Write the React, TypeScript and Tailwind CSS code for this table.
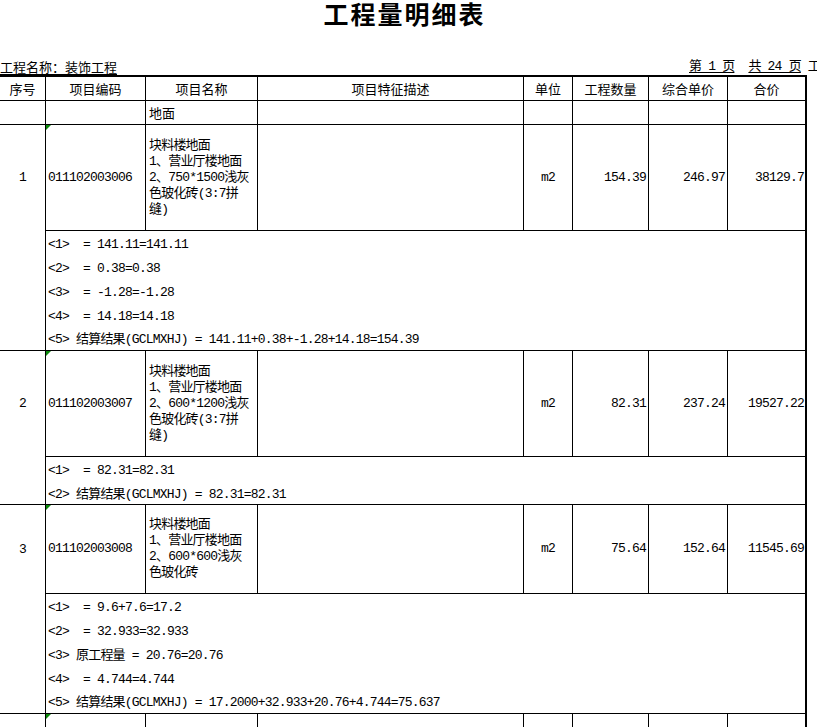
import React from "react";

type Item = {
  no: string;
  code: string;
  name: string[];
  unit: string;
  qty: string;
  price: string;
  total: string;
  calcs: string[];
};

const items: Item[] = [
  {
    no: "1",
    code: "011102003006",
    name: ["块料楼地面", "1、营业厅楼地面", "2、750*1500浅灰", "色玻化砖(3:7拼", "缝)"],
    unit: "m2",
    qty: "154.39",
    price: "246.97",
    total: "38129.7",
    calcs: [
      "<1>  = 141.11=141.11",
      "<2>  = 0.38=0.38",
      "<3>  = -1.28=-1.28",
      "<4>  = 14.18=14.18",
      "<5> 结算结果(GCLMXHJ) = 141.11+0.38+-1.28+14.18=154.39",
    ],
  },
  {
    no: "2",
    code: "011102003007",
    name: ["块料楼地面", "1、营业厅楼地面", "2、600*1200浅灰", "色玻化砖(3:7拼", "缝)"],
    unit: "m2",
    qty: "82.31",
    price: "237.24",
    total: "19527.22",
    calcs: ["<1>  = 82.31=82.31", "<2> 结算结果(GCLMXHJ) = 82.31=82.31"],
  },
  {
    no: "3",
    code: "011102003008",
    name: ["块料楼地面", "1、营业厅楼地面", "2、600*600浅灰", "色玻化砖"],
    unit: "m2",
    qty: "75.64",
    price: "152.64",
    total: "11545.69",
    calcs: [
      "<1>  = 9.6+7.6=17.2",
      "<2>  = 32.933=32.933",
      "<3> 原工程量 = 20.76=20.76",
      "<4>  = 4.744=4.744",
      "<5> 结算结果(GCLMXHJ) = 17.2000+32.933+20.76+4.744=75.637",
    ],
  },
];

const mono = "font-['Liberation_Mono','Noto_Sans_CJK_SC',monospace] tracking-[-0.8px] text-[13px]";

function Flag() {
  return (
    <span className="absolute left-0 top-0 h-0 w-0 border-t-[5px] border-r-[5px] border-t-[#0a8a0a] border-r-transparent" />
  );
}

function HeaderRow() {
  const cell = "flex h-[24px] items-center justify-center border-b border-black";
  return (
    <div className="flex font-['Noto_Sans_CJK_SC',sans-serif] text-[13px]">
      <div className={`${cell} w-[46px] border-r`}>序号</div>
      <div className={`${cell} w-[100px] border-r`}>项目编码</div>
      <div className={`${cell} w-[112px] border-r`}>项目名称</div>
      <div className={`${cell} w-[266px] border-r`}>项目特征描述</div>
      <div className={`${cell} w-[49px] border-r`}>单位</div>
      <div className={`${cell} w-[76px] border-r`}>工程数量</div>
      <div className={`${cell} w-[79px] border-r`}>综合单价</div>
      <div className={`${cell} w-[77px]`}>合价</div>
    </div>
  );
}

function SectionRow() {
  const cell = "flex h-[24px] items-center border-b border-black";
  return (
    <div className="flex font-['Noto_Sans_CJK_SC',sans-serif] text-[13px]">
      <div className={`${cell} w-[46px] border-r`} />
      <div className={`${cell} w-[100px] border-r`} />
      <div className={`${cell} w-[112px] border-r pl-[3px]`}>地面</div>
      <div className={`${cell} w-[266px] border-r`} />
      <div className={`${cell} w-[49px] border-r`} />
      <div className={`${cell} w-[76px] border-r`} />
      <div className={`${cell} w-[79px] border-r`} />
      <div className={`${cell} w-[77px]`} />
    </div>
  );
}

function Block({ item }: { item: Item }) {
  const rowH = item.name.length > 4 ? "h-[106px]" : "h-[89px]";
  const calcH = item.calcs.length > 2 ? "h-[120px]" : "h-[48px]";
  const cell = `flex ${rowH} items-center border-b border-black`;
  return (
    <div className={`flex ${mono}`}>
      <div className="w-[46px] border-r border-b border-black">
        <div className={`flex ${rowH} items-center justify-center`}>{item.no}</div>
      </div>
      <div className="flex flex-col">
        <div className="flex">
          <div className={`${cell} relative w-[100px] border-r pl-[2px]`}>
            <Flag />
            {item.code}
          </div>
          <div className={`${cell} w-[112px] border-r pl-[3px]`}>
            <div className="leading-[16px]">
              {item.name.map((l) => (
                <div key={l} className="whitespace-nowrap">
                  {l}
                </div>
              ))}
            </div>
          </div>
          <div className={`${cell} w-[266px] border-r`} />
          <div className={`${cell} w-[49px] justify-center border-r`}>{item.unit}</div>
          <div className={`${cell} w-[76px] justify-end border-r pr-[2px]`}>{item.qty}</div>
          <div className={`${cell} w-[79px] justify-end border-r pr-[2px]`}>{item.price}</div>
          <div className={`${cell} w-[77px] justify-end pr-[1px]`}>{item.total}</div>
        </div>
        <div className={`flex ${calcH} flex-col border-b border-black pl-[2px]`}>
          {item.calcs.map((c) => (
            <div key={c} className="flex flex-1 items-center whitespace-pre pt-[4px]">
              {c}
            </div>
          ))}
        </div>
      </div>
    </div>
  );
}

function EmptyRow() {
  const cell = "relative h-[106px] border-black";
  return (
    <div className="flex">
      <div className={`${cell} w-[46px] border-r`} />
      <div className={`${cell} w-[100px] border-r`}>
        <Flag />
      </div>
      <div className={`${cell} w-[112px] border-r`} />
      <div className={`${cell} w-[266px] border-r`} />
      <div className={`${cell} w-[49px] border-r`} />
      <div className={`${cell} w-[76px] border-r`} />
      <div className={`${cell} w-[79px] border-r`} />
      <div className={`${cell} w-[77px]`} />
    </div>
  );
}

export default function App() {
  return (
    <div className="h-[727px] w-[817px] overflow-hidden bg-white text-black">
      <div className="flex h-[30px] w-[807px] items-start justify-center pl-[2px] pt-[2px] font-['Liberation_Serif','Noto_Sans_CJK_SC',serif] text-[25px] font-bold leading-[28px] tracking-[2px]">
        工程量明细表
      </div>
      <div className={`flex h-[45px] items-end ${mono}`}>
        <div className="font-['Noto_Sans_CJK_SC',sans-serif] leading-[16px] tracking-normal underline underline-offset-2">
          工程名称：装饰工程
        </div>
        <div className="ml-auto w-[128px] overflow-hidden whitespace-pre leading-[16px]">
          <span className="underline underline-offset-2">第 1 页</span>
          {"  "}
          <span className="underline underline-offset-2">共 24 页</span>
          {" 工"}
        </div>
      </div>
      <div className="w-[807px] border-t-2 border-r-2 border-black">
        <HeaderRow />
        <SectionRow />
        {items.map((it) => (
          <Block key={it.no} item={it} />
        ))}
        <EmptyRow />
      </div>
    </div>
  );
}
